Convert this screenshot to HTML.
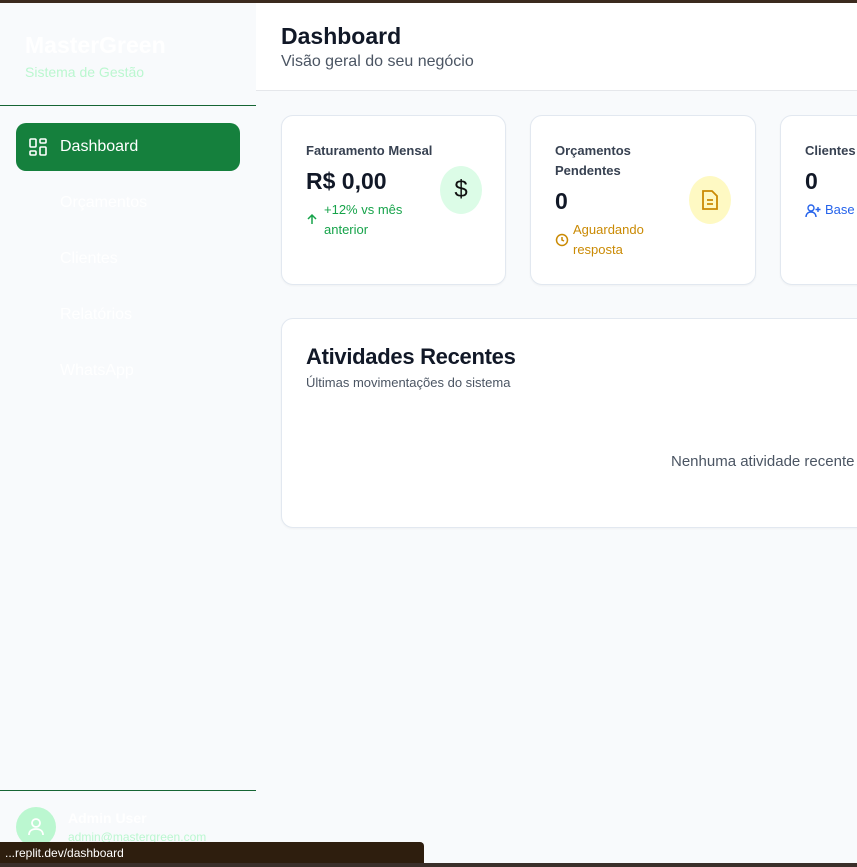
<!DOCTYPE html>
<html><head><meta charset="utf-8"><style>
*{box-sizing:border-box;margin:0;padding:0}
body{width:857px;height:867px;overflow:hidden;font-family:"Liberation Sans",sans-serif;background:#f8fafc;position:relative}
.topbar{position:absolute;left:0;top:0;width:857px;height:3px;background:#3b2a1e}
.side{position:absolute;left:0;top:3px;width:256px;height:864px;background:#f8fafc}
.brand{position:absolute;left:25px;top:29px;color:#fff;font-weight:bold;font-size:23px}
.sub{position:absolute;left:25px;top:61px;color:#bbf7d0;font-size:14px}
.hl{position:absolute;left:0;width:256px;height:1px;background:#166534}
.nav{position:absolute;left:16px;width:224px;height:48px;border-radius:10px;color:#fff;font-size:16px;display:flex;align-items:center;padding-left:44px}
.nav svg{position:absolute;left:13px;top:15px}
.act{background:#15803d}
.main{position:absolute;left:256px;top:3px;right:0;bottom:0}
.head{position:absolute;left:0;top:0;width:601px;height:88px;background:#fff;border-bottom:1px solid #e5e7eb}
.head h1{position:absolute;left:25px;top:20px;font-size:23px;color:#111827}
.head p{position:absolute;left:25px;top:50px;font-size:16px;color:#4b5563}
.card{position:absolute;background:#fff;border:1px solid #e2e8f0;border-radius:12px;box-shadow:0 1px 2px rgba(0,0,0,.04)}
.lbl{position:absolute;font-size:13px;color:#374151;font-weight:bold;line-height:20px}
.val{position:absolute;font-size:23px;font-weight:bold;color:#111827}
.ico{position:absolute;width:42px;height:48px;border-radius:50%;display:flex;align-items:center;justify-content:center}
.status{position:absolute;left:0;top:842px;width:424px;height:21px;background:#2e1e0e;border-radius:0 4px 0 0;color:#fff;font-size:12px;padding:4px 5px}
.bot{position:absolute;left:0;top:863px;width:857px;height:4px;background:#3a2f2a}
.small{position:absolute;left:0;top:0}
</style></head><body>
<div class="topbar"></div>
<div class="side">
<div class="brand">MasterGreen</div>
<div class="sub">Sistema de Gestão</div>
<div class="hl" style="top:102px"></div>
<div class="nav act" style="top:120px"><svg width="18" height="18" viewBox="0 0 18 18" fill="none" stroke="#fff" stroke-width="1.6"><rect x="1" y="1" width="6" height="8" rx="1"/><rect x="11" y="1" width="6" height="4" rx="1"/><rect x="11" y="9" width="6" height="8" rx="1"/><rect x="1" y="13" width="6" height="4" rx="1"/></svg>Dashboard</div>
<div class="nav" style="top:176px">Orçamentos</div>
<div class="nav" style="top:232px">Clientes</div>
<div class="nav" style="top:288px">Relatórios</div>
<div class="nav" style="top:344px">WhatsApp</div>
<div class="hl" style="top:787px"></div>
<div style="position:absolute;left:16px;top:804px;width:40px;height:40px;border-radius:50%;background:#bbf7d0"><svg width="40" height="40" viewBox="0 0 40 40" fill="none" stroke="#fff" stroke-width="1.8"><circle cx="20" cy="16" r="4"/><path d="M13 28c0-4 3-6 7-6s7 2 7 6"/></svg></div>
<div style="position:absolute;left:68px;top:807px;color:#fff;font-weight:bold;font-size:14px">Admin User</div>
<div style="position:absolute;left:68px;top:827px;color:#bbf7d0;font-size:12px">admin@mastergreen.com</div>
</div>
<div class="main">
<div class="head"><h1>Dashboard</h1><p>Visão geral do seu negócio</p></div>
<div class="card" style="left:25px;top:112px;width:225px;height:170px">
<div class="lbl" style="left:24px;top:25px">Faturamento Mensal</div>
<div class="val" style="left:24px;top:52px">R$ 0,00</div>
<div class="ico" style="left:158px;top:50px;background:#dcfce7;font-size:24px;color:#111">$</div>
<svg style="position:absolute;left:24px;top:97px" width="12" height="12" viewBox="0 0 12 12" fill="none" stroke="#16a34a" stroke-width="1.5"><path d="M6 11V2M2 6l4-4 4 4"/></svg>
<div style="position:absolute;left:42px;top:84px;font-size:13px;color:#16a34a;line-height:20px;width:100px">+12% vs mês anterior</div>
</div>
<div class="card" style="left:274px;top:112px;width:226px;height:170px">
<div class="lbl" style="left:24px;top:25px;width:120px">Orçamentos Pendentes</div>
<div class="val" style="left:24px;top:72px">0</div>
<div class="ico" style="left:158px;top:60px;background:#fef9c3"><svg width="20" height="22" viewBox="0 0 20 22" fill="none" stroke="#ca8a04" stroke-width="1.8"><path d="M3 2h9l5 5v13H3z"/><path d="M7 11h6M7 15h6"/></svg></div>
<svg style="position:absolute;left:24px;top:117px" width="14" height="14" viewBox="0 0 14 14" fill="none" stroke="#ca8a04" stroke-width="1.5"><circle cx="7" cy="7" r="5.5"/><path d="M7 4v3l2 1"/></svg>
<div style="position:absolute;left:42px;top:104px;font-size:13px;color:#ca8a04;line-height:20px;width:100px">Aguardando resposta</div>
</div>
<div class="card" style="left:524px;top:112px;width:200px;height:170px">
<div class="lbl" style="left:24px;top:25px">Clientes</div>
<div class="val" style="left:24px;top:52px">0</div>
<svg style="position:absolute;left:24px;top:88px" width="16" height="14" viewBox="0 0 16 14" fill="none" stroke="#2563eb" stroke-width="1.4"><circle cx="6" cy="4" r="3"/><path d="M1 13c0-3 2-5 5-5s5 2 5 5M13 3v5M10.5 5.5h5"/></svg>
<div style="position:absolute;left:44px;top:84px;font-size:13px;color:#2563eb;line-height:20px">Base</div>
</div>
<div class="card" style="left:25px;top:315px;width:620px;height:210px">
<div style="position:absolute;left:24px;top:25px;font-size:22px;color:#111827;font-weight:bold;letter-spacing:-0.3px">Atividades Recentes</div>
<div style="position:absolute;left:24px;top:56px;font-size:13px;color:#4b5563">Últimas movimentações do sistema</div>
<div style="position:absolute;left:389px;top:134px;font-size:15px;color:#4b5563;white-space:nowrap">Nenhuma atividade recente</div>
</div>
</div>
<div class="status">...replit.dev/dashboard</div>
<div class="bot"></div>
</body></html>
